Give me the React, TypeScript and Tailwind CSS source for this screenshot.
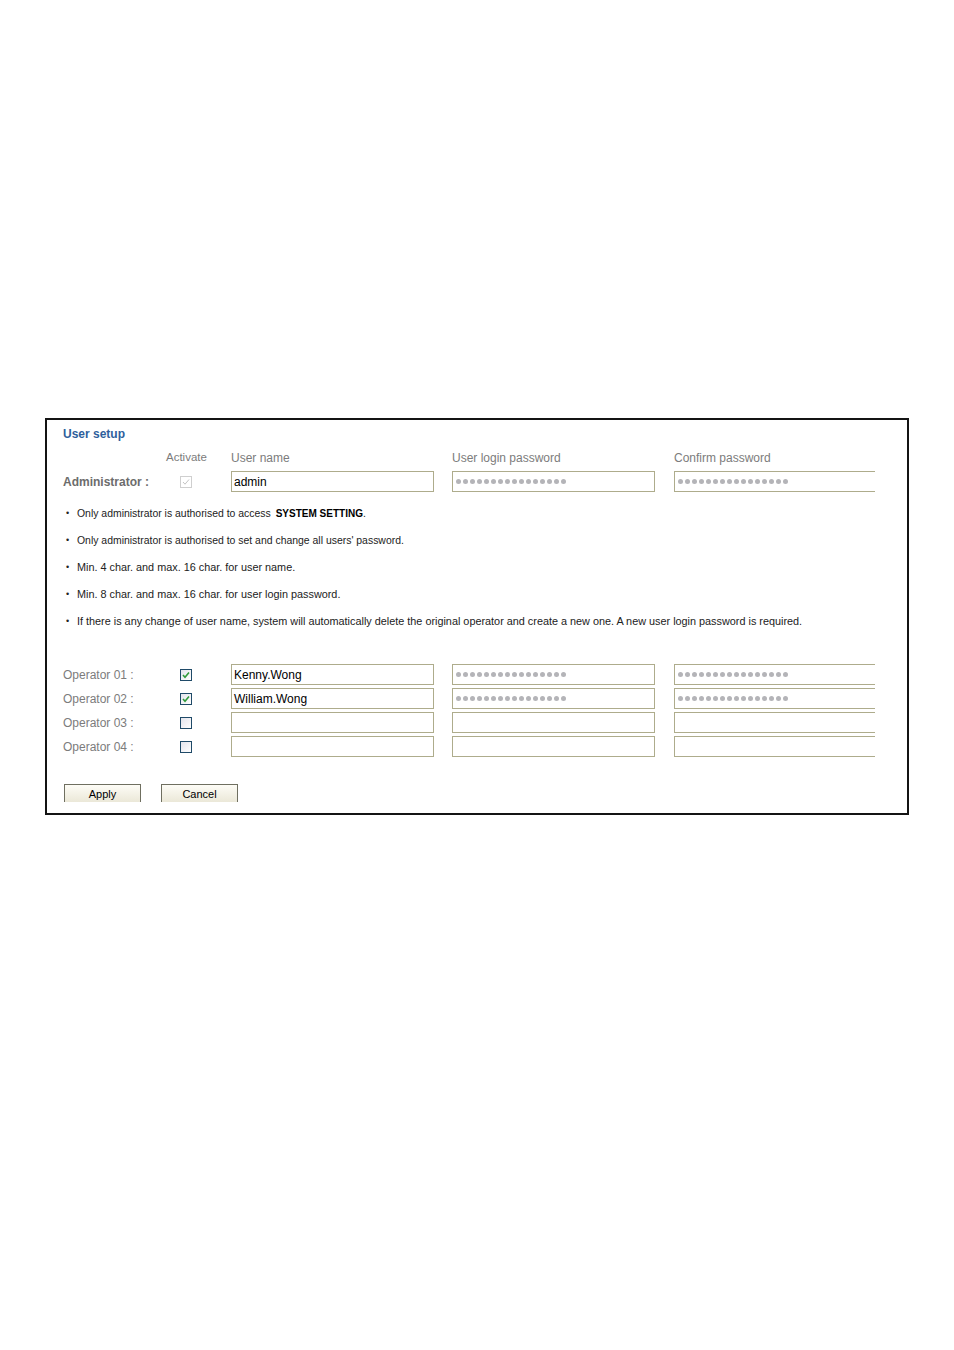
import React from "react";

const font = { fontFamily: '"Liberation Sans", Arial, sans-serif' };

function Dots() {
  return (
    <div className="flex items-center gap-[2px] pl-[3px]">
      {Array.from({ length: 16 }).map((_, i) => (
        <span key={i} className="block w-[5px] h-[5px] rounded-full bg-[#b4b4b8]" />
      ))}
    </div>
  );
}

function Field({ value, dots, noRight }: { value?: string; dots?: boolean; noRight?: boolean }) {
  return (
    <div
      className={
        "h-[21px] flex items-center border-y border-l border-[#aeac8c] bg-white " +
        (noRight ? "w-[201px]" : "w-[203px] border-r")
      }
    >
      {dots ? <Dots /> : <span className="pl-[2px] text-[12px] text-black leading-none">{value}</span>}
    </div>
  );
}

function Check({ checked, disabled }: { checked?: boolean; disabled?: boolean }) {
  return (
    <div
      className={
        "w-[12px] h-[12px] border flex items-center justify-center " +
        (disabled
          ? "border-[#cfcfcf] bg-white"
          : "border-[#1f4a68] bg-gradient-to-br from-[#e4e4ec] to-white")
      }
    >
      {checked && (
        <svg width="8" height="8" viewBox="0 0 8 8">
          <path
            d="M1 4 L3 6.2 L7 1.5"
            fill="none"
            stroke={disabled ? "#c4c4c4" : "#2f9a3a"}
            strokeWidth={disabled ? 1 : 1.6}
          />
        </svg>
      )}
    </div>
  );
}

function Row({
  label,
  bold,
  checked,
  disabled,
  name,
  pw,
}: {
  label: string;
  bold?: boolean;
  checked?: boolean;
  disabled?: boolean;
  name?: string;
  pw?: boolean;
}) {
  return (
    <div className="flex items-center h-[21px]">
      <div
        className={
          "w-[103px] text-[12px] leading-none " +
          (bold ? "font-bold text-[#6c6c6c]" : "text-[#7c7c7c]")
        }
      >
        {label}
      </div>
      <div className="w-[40px] flex justify-center">
        <Check checked={checked} disabled={disabled} />
      </div>
      <div className="w-[25px]" />
      <Field value={name} />
      <div className="w-[18px]" />
      <Field dots={pw} />
      <div className="w-[19px]" />
      <Field dots={pw} noRight />
    </div>
  );
}

const bullets: { size: string; node: React.ReactNode }[] = [
  {
    size: "text-[10.45px]",
    node: (
      <>
        Only administrator is authorised to access{" "}
        <span className="font-bold text-[10px] text-black ml-[2px]">SYSTEM SETTING</span>.
      </>
    ),
  },
  {
    size: "text-[10.45px]",
    node: <>Only administrator is authorised to set and change all users' password.</>,
  },
  { size: "text-[10.85px]", node: <>Min. 4 char. and max. 16 char. for user name.</> },
  { size: "text-[10.85px]", node: <>Min. 8 char. and max. 16 char. for user login password.</> },
  {
    size: "text-[10.85px]",
    node: (
      <>
        If there is any change of user name, system will automatically delete the original operator
        and create a new one. A new user login password is required.
      </>
    ),
  },
];

export default function App() {
  return (
    <div className="w-[954px] h-[1350px] bg-white" style={font}>
      <div className="pt-[418px] pl-[45px]">
        <div className="w-[864px] border-2 border-[#141414] pl-[16px] pb-[11px]">
          <div className="mt-[6px] h-[16px] flex items-center text-[12px] font-bold text-[#2f5f9c]">
            User setup
          </div>
          <div className="mt-[8px] h-[16px] flex items-center text-[12px] text-[#7c7c7c]">
            <div className="w-[103px]" />
            <div className="w-[40px] text-center text-[11.5px]">Activate</div>
            <div className="w-[25px]" />
            <div className="w-[221px]">User name</div>
            <div className="w-[222px]">User login password</div>
            <div>Confirm password</div>
          </div>
          <div className="mt-[5px]">
            <Row label="Administrator :" bold checked disabled name="admin" pw />
          </div>
          <div className="mt-[8px]">
            {bullets.map((b, i) => (
              <div key={i} className={"h-[27px] flex items-center text-[#222] " + b.size}>
                <span className="w-[14px] pl-[3px] text-[9px]">•</span>
                <span>{b.node}</span>
              </div>
            ))}
          </div>
          <div className="mt-[29px] flex flex-col gap-[3px]">
            <Row label="Operator 01 :" checked name="Kenny.Wong" pw />
            <Row label="Operator 02 :" checked name="William.Wong" pw />
            <Row label="Operator 03 :" />
            <Row label="Operator 04 :" />
          </div>
          <div className="mt-[27px] flex gap-[20px] pl-[1px]">
            <button className="w-[77px] h-[18px] border-t border-x border-[#6f6f60] bg-gradient-to-b from-[#fdfcf6] to-[#ebe8d8] text-[11px] text-black leading-none pt-[1px]">
              Apply
            </button>
            <button className="w-[77px] h-[18px] border-t border-x border-[#6f6f60] bg-gradient-to-b from-[#fdfcf6] to-[#ebe8d8] text-[11px] text-black leading-none pt-[1px]">
              Cancel
            </button>
          </div>
        </div>
      </div>
    </div>
  );
}
